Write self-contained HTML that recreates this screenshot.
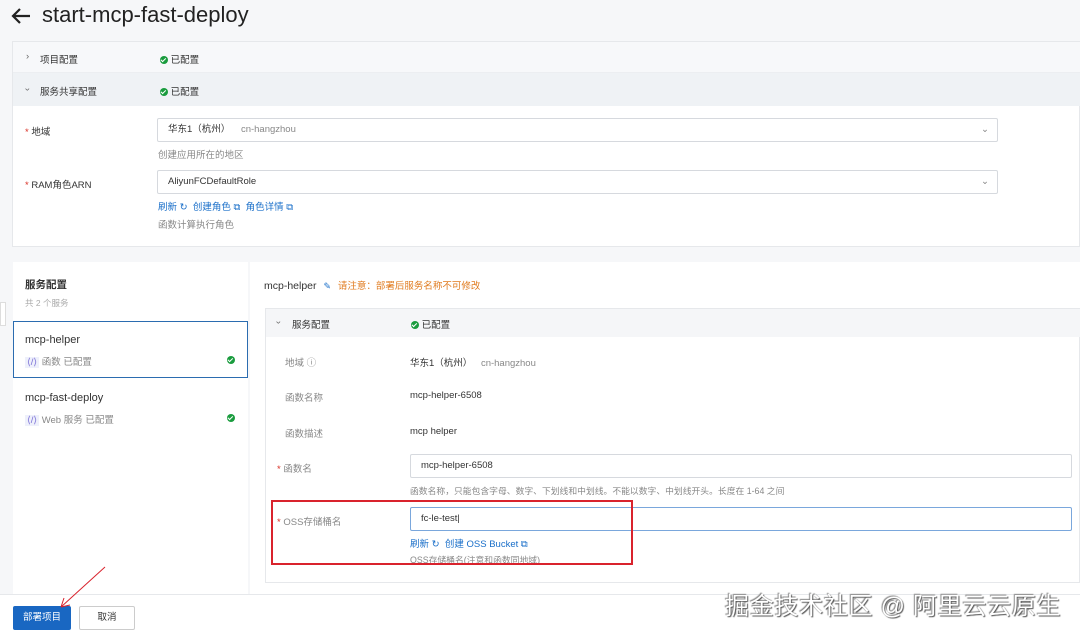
<!DOCTYPE html>
<html><head><meta charset="utf-8"><style>
*{margin:0;padding:0;box-sizing:border-box}
body{width:1080px;height:635px;overflow:hidden;background:#f6f7f9;font-family:"Liberation Sans","Noto Sans CJK SC",sans-serif;color:#333;font-size:9.5px;position:relative}
.a{position:absolute}
.g{color:#888}
.chk{display:inline-block;width:8px;height:8px;border-radius:50%;background:#1a9c3e;vertical-align:-1px;position:relative}
.chk:after{content:"";position:absolute;left:2.3px;top:1.4px;width:2px;height:3.5px;border:solid #fff;border-width:0 1.2px 1.2px 0;transform:rotate(45deg)}
.inp{position:absolute;background:#fff;border:1px solid #d6d9de;border-radius:2px;height:24px;padding-left:10px;line-height:22px;font-size:9.5px;color:#333}
.lnk{color:#1a6fc9}
.req{color:#d93026}
</style></head><body>
<svg class="a" style="left:11px;top:7px" width="20" height="18"><path d="M19 9 H3 M9 2 L2 9 L9 16" stroke="#222" stroke-width="2.2" fill="none"/></svg>
<div class="a" style="left:42px;top:2px;font-size:22px;color:#222">start-mcp-fast-deploy</div>

<div class="a" style="left:12px;top:41px;width:1068px;height:206px;background:#fff;border:1px solid #e6e8eb"></div>
<div class="a" style="left:13px;top:42px;width:1067px;height:31px;background:#f7f8fa;border-bottom:1px solid #eceef1"></div>
<div class="a" style="left:13px;top:73px;width:1067px;height:33px;background:#eff2f5"></div>
<div class="a" style="left:26px;top:51px;color:#666">›</div>
<div class="a" style="left:40px;top:52px;color:#333">项目配置</div>
<div class="a" style="left:160px;top:52px"><span class="chk"></span> 已配置</div>
<div class="a" style="left:26px;top:84px;color:#666;transform:rotate(90deg)">›</div>
<div class="a" style="left:40px;top:84px;color:#333">服务共享配置</div>
<div class="a" style="left:160px;top:84px"><span class="chk"></span> 已配置</div>

<div class="a" style="left:25px;top:124px"><span class="req">*</span> 地域</div>
<div class="inp" style="left:157px;top:118px;width:841px">华东1（杭州） <span class="g" style="margin-left:8px">cn-hangzhou</span><span class="a g" style="right:8px;top:0">⌄</span></div>
<div class="a g" style="left:158px;top:147px">创建应用所在的地区</div>
<div class="a" style="left:25px;top:177px"><span class="req">*</span> RAM角色ARN</div>
<div class="inp" style="left:157px;top:170px;width:841px">AliyunFCDefaultRole<span class="a g" style="right:8px;top:0">⌄</span></div>
<div class="a lnk" style="left:158px;top:199px">刷新 ↻ &nbsp;创建角色 ⧉ &nbsp;角色详情 ⧉</div>
<div class="a g" style="left:158px;top:217px">函数计算执行角色</div>

<div class="a" style="left:13px;top:262px;width:235px;height:332px;background:#fff"></div>
<div class="a" style="left:0;top:302px;width:6px;height:24px;background:#fff;border:1px solid #ddd"></div>
<div class="a" style="left:25px;top:277px;font-size:10.5px;font-weight:bold">服务配置</div>
<div class="a" style="left:25px;top:297px;color:#aaa;font-size:8.5px">共 2 个服务</div>
<div class="a" style="left:13px;top:321px;width:235px;height:57px;border:1.5px solid #2b6cb0"></div>
<div class="a" style="left:25px;top:334px;font-size:11px">mcp-helper</div>
<div class="a g" style="left:25px;top:354px"><span style="background:#eef0fb;color:#7b6fd6;padding:0 2px">⟨/⟩</span> 函数 已配置</div>
<div class="a" style="left:227px;top:355px"><span class="chk"></span></div>
<div class="a" style="left:25px;top:392px;font-size:11px">mcp-fast-deploy</div>
<div class="a g" style="left:25px;top:412px"><span style="background:#eef0fb;color:#7b6fd6;padding:0 2px">⟨/⟩</span> Web 服务 已配置</div>
<div class="a" style="left:227px;top:413px"><span class="chk"></span></div>

<div class="a" style="left:250px;top:262px;width:830px;height:332px;background:#fff"></div>
<div class="a" style="left:264px;top:278px;font-size:10.5px">mcp-helper <span class="lnk" style="font-size:9px;margin-left:4px">✎</span> <span style="color:#e07b1f;margin-left:4px;font-size:9.5px">请注意：部署后服务名称不可修改</span></div>
<div class="a" style="left:265px;top:308px;width:815px;height:275px;border:1px solid #e6e8eb"></div>
<div class="a" style="left:266px;top:309px;width:814px;height:28px;background:#f5f6f8"></div>
<div class="a" style="left:277px;top:317px;color:#666;transform:rotate(90deg)">›</div>
<div class="a" style="left:292px;top:317px">服务配置</div>
<div class="a" style="left:411px;top:317px"><span class="chk"></span> 已配置</div>
<div class="a g" style="left:285px;top:355px">地域 ⓘ</div>
<div class="a" style="left:410px;top:355px">华东1（杭州） <span class="g" style="margin-left:6px">cn-hangzhou</span></div>
<div class="a g" style="left:285px;top:390px">函数名称</div>
<div class="a" style="left:410px;top:390px">mcp-helper-6508</div>
<div class="a g" style="left:285px;top:426px">函数描述</div>
<div class="a" style="left:410px;top:426px">mcp helper</div>
<div class="a g" style="left:277px;top:461px"><span class="req">*</span> 函数名</div>
<div class="inp" style="left:410px;top:454px;width:662px">mcp-helper-6508</div>
<div class="a g" style="left:410px;top:484px;font-size:8.8px">函数名称，只能包含字母、数字、下划线和中划线。不能以数字、中划线开头。长度在 1-64 之间</div>
<div class="a g" style="left:277px;top:514px"><span class="req">*</span> OSS存储桶名</div>
<div class="inp" style="left:410px;top:507px;width:662px;border-color:#7aa7dc">fc-le-test|</div>
<div class="a lnk" style="left:410px;top:536px">刷新 ↻ &nbsp;创建 OSS Bucket ⧉</div>
<div class="a g" style="left:410px;top:553px;font-size:8.8px">OSS存储桶名(注意和函数同地域)</div>
<div class="a" style="left:271px;top:500px;width:362px;height:65px;border:2.5px solid #d9232d"></div>

<div class="a" style="left:0;top:594px;width:1080px;height:41px;background:#fff;border-top:1px solid #e6e8eb"></div>
<div class="a" style="left:13px;top:606px;width:58px;height:24px;background:#1967c2;color:#fff;text-align:center;line-height:24px;border-radius:2px">部署项目</div>
<div class="a" style="left:79px;top:606px;width:56px;height:24px;border:1px solid #ccc;text-align:center;line-height:22px;border-radius:2px">取消</div>
<svg class="a" style="left:55px;top:565px" width="55" height="50"><path d="M50 2 L6 42 M6 42 L9 33 M6 42 L15 40" stroke="#d9232d" stroke-width="1" fill="none"/></svg>
<div class="a" style="left:725px;top:586px;font-size:24px;color:#fff;text-shadow:1px 1px 1px #555,-1px -1px 1px #888;letter-spacing:0.7px">掘金技术社区 @ 阿里云云原生</div>
</body></html>
